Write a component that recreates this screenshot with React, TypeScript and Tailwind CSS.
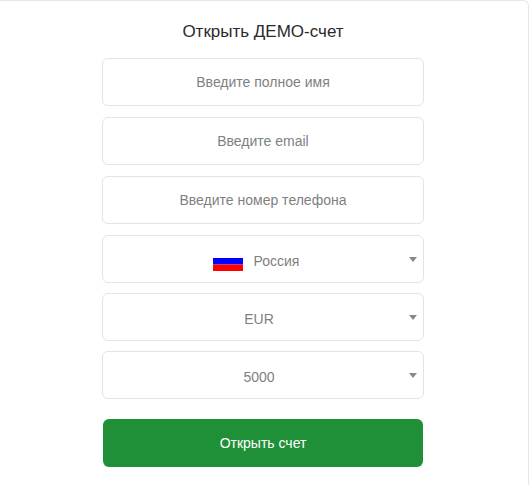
export default function App() {
  const font = "font-['Liberation_Sans',Arial,sans-serif]";
  const Input = ({ text, mb }: { text: string; mb: string }) => (
    <div className={`h-12 w-[322px] rounded-md border border-[#e3e3e3] bg-white flex items-center justify-center text-[14px] text-[#7f7f7f] ${mb}`}>
      {text}
    </div>
  );
  const Select = ({ text, flag }: { text: string; flag?: boolean }) => (
    <div className="relative h-12 w-[322px] rounded-md border border-[#e3e3e3] bg-white flex items-center justify-center text-[14px] text-[#7f7f7f] mb-[10px]">
      {flag ? (
        <div className="flex items-center mr-[14px] mt-[5px]">
          <svg width="30" height="13" viewBox="0 0 30 13" className="mt-[6px] mr-[11px]">
            <rect width="30" height="6.5" fill="#0000ff" />
            <rect y="6.5" width="30" height="6.5" fill="#ff0000" />
          </svg>
          <span>{text}</span>
        </div>
      ) : (
        <span className="mt-[5px] mr-[8px]">{text}</span>
      )}
      <svg width="8" height="5" viewBox="0 0 8 5" className="absolute right-[6px] top-[21px]">
        <path d="M0 0H8L4 5Z" fill="#888888" />
      </svg>
    </div>
  );
  return (
    <div className={`${font} w-[529px] h-[485px] bg-white`}>
      <div className="h-[485px] w-full border-t border-r border-[#e6e6e6] rounded-tr-md pr-[2px] flex flex-col items-center">
        <h1 className="h-[57px] pt-[18px] text-[17px] leading-[26px] text-[#2a2a2a]">Открыть ДЕМО-счет</h1>
        <Input text="Введите полное имя" mb="mb-[11px]" />
        <Input text="Введите email" mb="mb-[11px]" />
        <Input text="Введите номер телефона" mb="mb-[11px]" />
        <Select text="Россия" flag />
        <Select text="EUR" />
        <Select text="5000" />
        <button className="mt-[10px] h-12 w-[320px] rounded-md bg-[#1f9037] text-white text-[14px] flex items-center justify-center">
          Открыть счет
        </button>
      </div>
    </div>
  );
}
